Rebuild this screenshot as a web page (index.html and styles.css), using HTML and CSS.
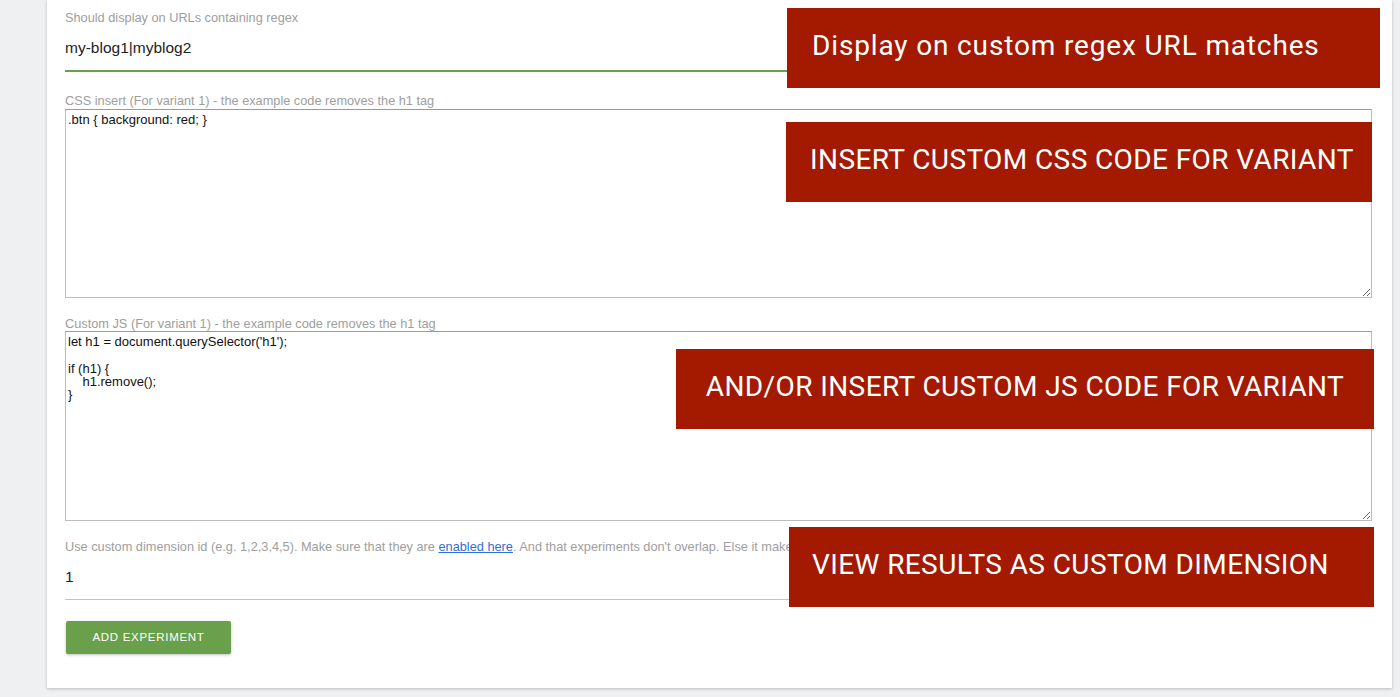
FILE: index.html
```html
<!DOCTYPE html>
<html lang="en">
<head>
<meta charset="utf-8">
<title>Add experiment</title>
<link rel="stylesheet" href="styles.css">
</head>
<body>
<div class="page">
  <form class="card">
    <div class="field field-first">
      <label class="label">Should display on URLs containing regex</label>
      <input class="line-input active" type="text" value="my-blog1|myblog2">
    </div>
    <div class="field">
      <label class="label label-tight">CSS insert (For variant 1) - the example code removes the h1 tag</label>
      <textarea class="code code-css" spellcheck="false">.btn { background: red; }</textarea>
    </div>
    <div class="field">
      <label class="label label-tighter">Custom JS (For variant 1) - the example code removes the h1 tag</label>
      <textarea class="code code-js" spellcheck="false">let h1 = document.querySelector('h1');

if (h1) {
    h1.remove();
}</textarea>
    </div>
    <div class="field field-last">
      <label class="label">Use custom dimension id (e.g. 1,2,3,4,5). Make sure that they are <a href="#" class="link">enabled here</a>. And that experiments don't overlap. Else it makes results unreliable.</label>
      <input class="line-input" type="text" value="1">
    </div>
    <button type="button" class="btn-add">Add experiment</button>
  </form>

  <div class="callout callout-1">Display on custom regex URL matches</div>
  <div class="callout callout-2">INSERT CUSTOM CSS CODE FOR VARIANT</div>
  <div class="callout callout-3">AND/OR INSERT CUSTOM JS CODE FOR VARIANT</div>
  <div class="callout callout-4">VIEW RESULTS AS CUSTOM DIMENSION</div>
</div>
</body>
</html>
```

FILE: styles.css
```css
* { box-sizing: border-box; }

html, body {
  margin: 0;
  padding: 0;
  background: #eef0f2;
  height: 697px;
  overflow: hidden;
}

body {
  font-family: "Liberation Sans", Arial, sans-serif;
  color: #222;
}

.page {
  position: relative;
  height: 697px;
}

.card {
  margin-left: 47px;
  width: 1345px;
  background: #fff;
  padding: 10px 20px 34px 18px;
  box-shadow: 0 1px 3px rgba(0, 0, 0, 0.22);
  display: flex;
  flex-direction: column;
}

.field {
  display: flex;
  flex-direction: column;
  margin-bottom: 18px;
}

.field-first { margin-bottom: 21px; }
.field-last { margin-bottom: 21px; }

.label {
  font-size: 12.75px;
  line-height: 14px;
  padding-top: 1px;
  color: #9e9e9e;
  white-space: nowrap;
  overflow: hidden;
}

.label-tight { margin-bottom: 1px; }
.label-tighter { margin-bottom: 0; }

.link {
  color: #2f6fd6;
  text-decoration: underline;
}

.line-input {
  font-family: "Liberation Sans", Arial, sans-serif;
  font-size: 15.5px;
  color: #222;
  border: none;
  border-bottom: 1px solid #c4c4c4;
  height: 46px;
  padding: 1px 0 0;
  outline: none;
  background: transparent;
}

.line-input.active {
  border-bottom: 2px solid #6a9f4b;
  height: 47px;
}

.code {
  font-family: "Liberation Sans", Arial, sans-serif;
  font-size: 13px;
  line-height: 13.3px;
  color: #111;
  border: 1px solid #bdbdbd;
  border-top-color: #9a9a9a;
  padding: 3px 2px 2px;
  resize: vertical;
  outline: none;
  width: 100%;
}

.code-css { height: 189px; }
.code-js { height: 190px; }

.btn-add {
  align-self: flex-start;
  margin-left: 1px;
  width: 165px;
  height: 33px;
  background: #6a9f4b;
  color: #fff;
  border: none;
  border-radius: 2px;
  box-shadow: 0 1px 3px rgba(0, 0, 0, 0.25);
  font-family: "Liberation Sans", Arial, sans-serif;
  font-size: 11.5px;
  letter-spacing: 0.7px;
  text-transform: uppercase;
  cursor: pointer;
  padding: 0 0 1px;
}

.callout {
  position: absolute;
  height: 80px;
  background: #a31a00;
  color: #fff;
  font-family: Roboto, "Liberation Sans", sans-serif;
  font-size: 28px;
  letter-spacing: 0.4px;
  display: flex;
  align-items: center;
  padding-bottom: 5px;
  white-space: nowrap;
}

.callout-1 { left: 787px; top: 8px; width: 593px; padding-left: 25px; letter-spacing: 0.85px; }
.callout-2 { left: 786px; top: 122px; width: 586px; padding-left: 24px; }
.callout-3 { left: 676px; top: 349px; width: 698px; justify-content: center; }
.callout-4 { left: 789px; top: 527px; width: 585px; padding-left: 23px; }
```
